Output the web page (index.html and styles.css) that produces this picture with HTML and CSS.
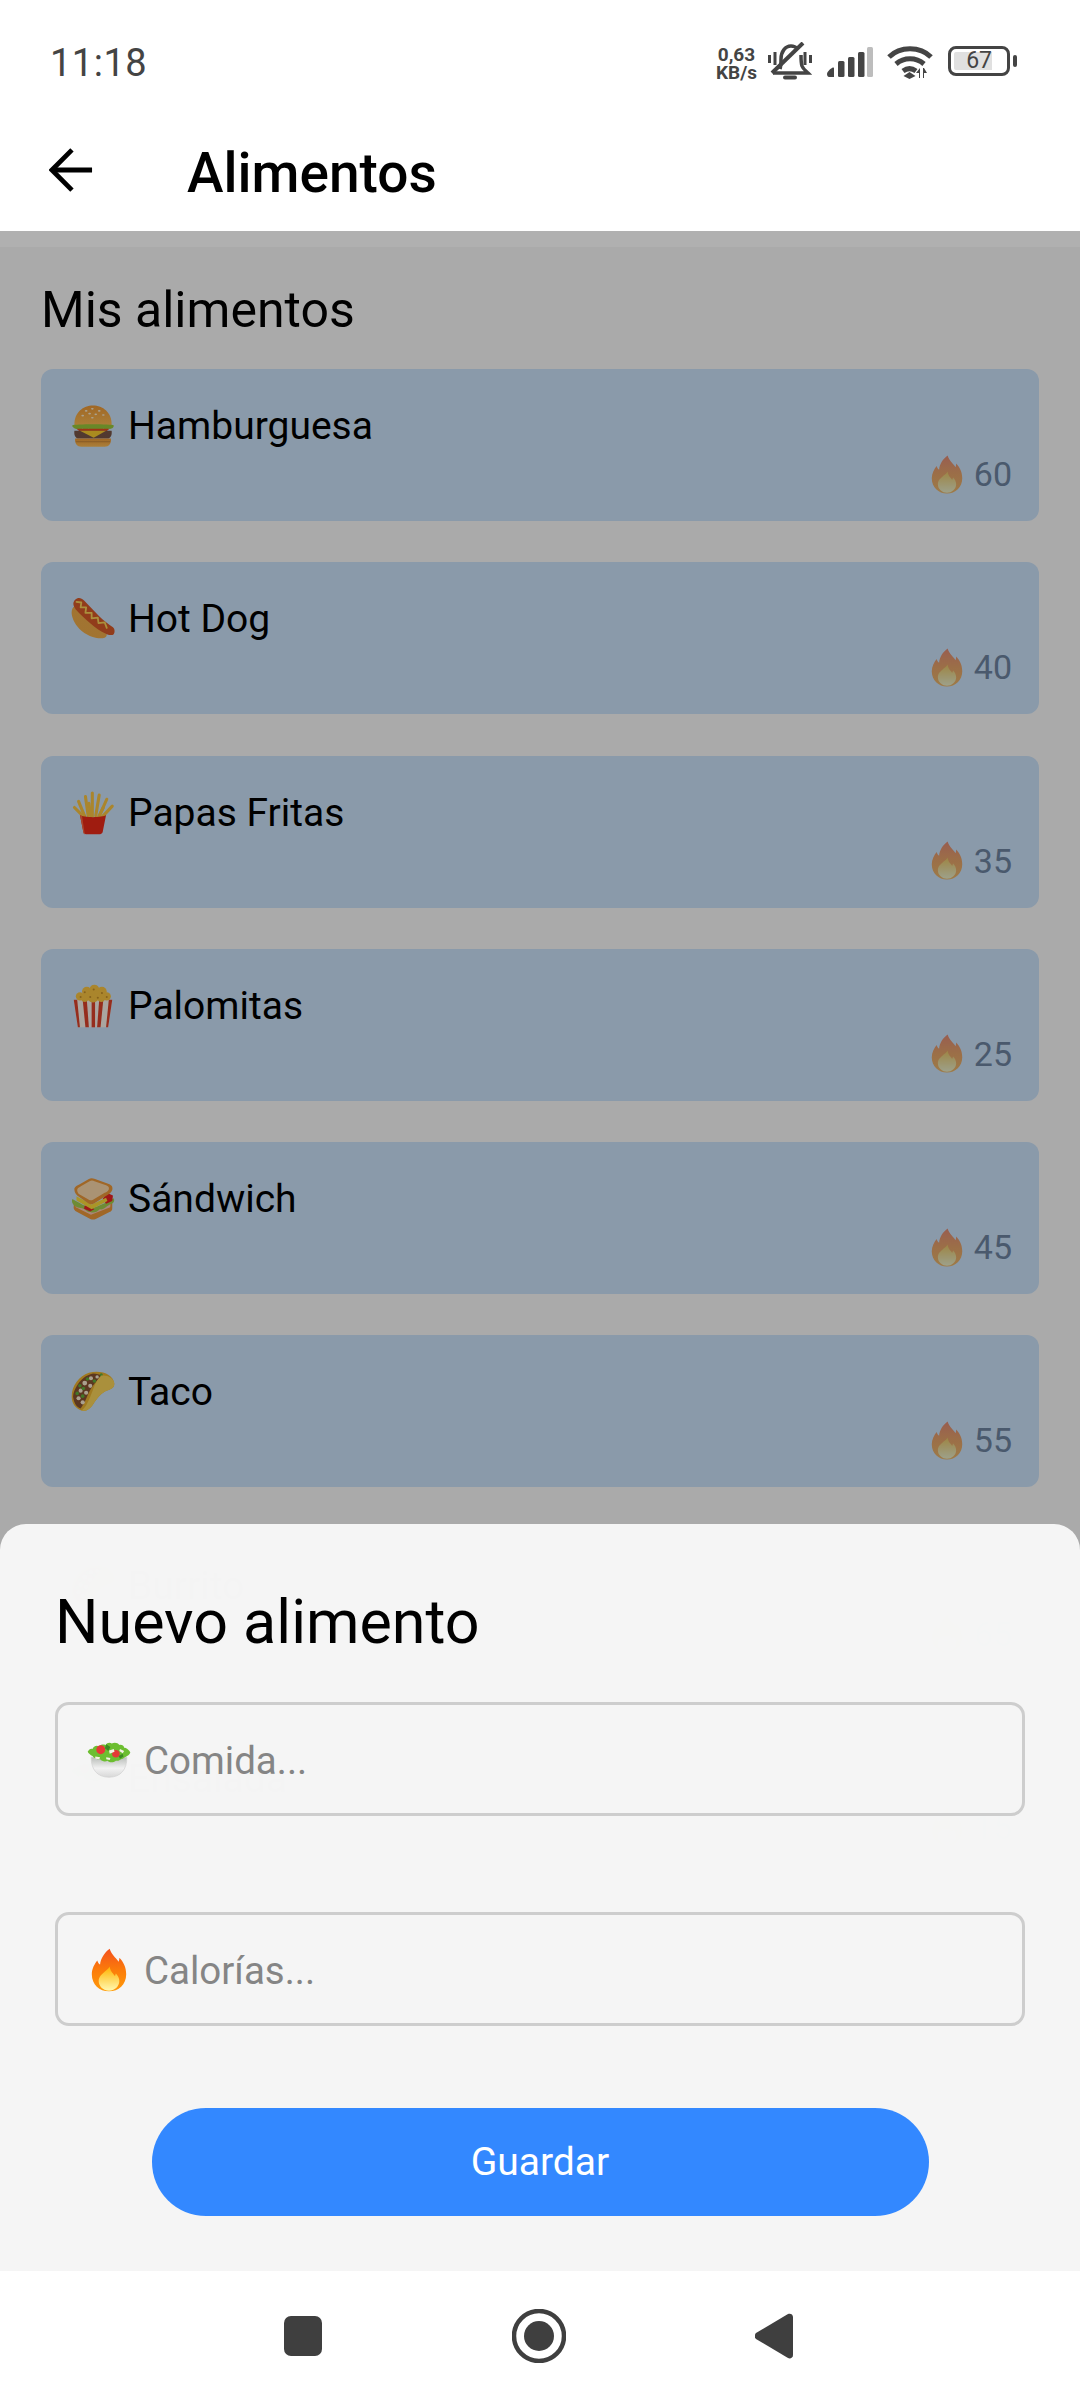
FILE: index.html
```html
<!DOCTYPE html>
<html lang="es">
<head>
<meta charset="utf-8">
<title>Alimentos</title>
<link rel="stylesheet" href="styles.css">
</head>
<body>
<svg class="defs" width="0" height="0" aria-hidden="true">
  <defs>
    <linearGradient id="flameOuter" x1="0" y1="0" x2="0" y2="1">
      <stop offset="0" stop-color="#f4511e"/><stop offset=".5" stop-color="#fb7c0a"/><stop offset="1" stop-color="#ff9a0a"/>
    </linearGradient>
    <linearGradient id="flameInner" x1="0" y1="0" x2="0" y2="1">
      <stop offset="0" stop-color="#ffb300"/><stop offset="1" stop-color="#fff8b0"/>
    </linearGradient>
    <linearGradient id="bun" x1="0" y1="0" x2="0" y2="1">
      <stop offset="0" stop-color="#f09a36"/><stop offset="1" stop-color="#ffbe55"/>
    </linearGradient>
    <linearGradient id="bowl" x1="0" y1="0" x2="0" y2="1">
      <stop offset="0" stop-color="#b9bdb9"/><stop offset=".55" stop-color="#f2f2f2"/><stop offset="1" stop-color="#d8d8d8"/>
    </linearGradient>
    <symbol id="flame" viewBox="0 0 52 64">
      <path fill="url(#flameOuter)" d="M27 1c3 9 8 12 13 19 1-3 1-4 1-6 6 6 10 14 10 24 0 15-11 25-25 25S1 53 1 38c0-8 4-15 8-20 1 3 2 5 4 6 1-9 6-17 14-23z"/>
      <path fill="url(#flameInner)" d="M27 27c1 7 4 9 7 13 1 2 1-1 2-3 3 3 5 7 5 11 0 8-7 14-15 14s-15-6-15-14c0-7 5-10 9-14 3-2 6-5 7-7z"/>
    </symbol>
    <symbol id="burger" viewBox="0 0 64 64">
      <path fill="url(#bun)" d="M5 31C4 12 18 2 32 2s28 10 27 29z"/>
      <g fill="#fff1d6"><ellipse cx="22" cy="10" rx="2" ry="1.200"/><ellipse cx="31" cy="7" rx="2" ry="1.200"/><ellipse cx="41" cy="10" rx="2" ry="1.200"/><ellipse cx="17" cy="17" rx="2" ry="1.200"/><ellipse cx="27" cy="14" rx="2" ry="1.200"/><ellipse cx="36" cy="15" rx="2" ry="1.200"/><ellipse cx="47" cy="16" rx="2" ry="1.200"/><ellipse cx="31" cy="20" rx="2" ry="1.200"/></g>
      <path fill="#9ccc3c" d="M2 31c3-2 57-2 60 0 1 3-3 6-7 5-3 2-6 1-8 0-3 2-7 2-10 1-4 1-8 1-11-1-3 2-7 1-9 0-5 2-16 0-15-5z"/>
      <path fill="#ef4d20" d="M8 36h48l-6 5H14z"/>
      <path fill="#7a5648" d="M5 39h54c1 5-1 11-5 11H10c-4 0-6-6-5-11z"/>
      <path fill="#ffd02e" d="M13 39h38L33 49z"/>
      <path fill="url(#bun)" d="M6 50h52c1 7-3 12-9 12H15C9 62 5 57 6 50z"/>
      <path fill="#c98738" d="M7 54h50v1.600H7z"/>
    </symbol>
    <symbol id="hotdog" viewBox="0 0 64 64">
      <path fill="#f2ae4a" d="M2 17c-3 6 0 18 10 29 10 10 24 15 34 14 5-1 6-3 6-6L15 14c-4-2-11-2-13 3z"/>
      <path fill="#d95a28" d="M6 4c4-4 9-3 13 1l22 23c6 6 13 11 20 16 3 2 3 8 1 10s-7 2-12-1C37 47 20 32 7 18 3 13 2 8 6 4z"/>
      <path fill="none" stroke="#ffd75a" stroke-width="2.600" stroke-linecap="round" stroke-linejoin="round" d="M8 7l7 1-1 7 8 0-1 8 9 0 0 8 9-1 1 8 9-1 3 8"/>
    </symbol>
    <symbol id="fries" viewBox="0 0 64 64">
      <g stroke="#ffc843" stroke-width="4.500" stroke-linecap="round">
        <path d="M31 3v34"/><path d="M21 8l4 28"/><path d="M41 6l-5 30"/><path d="M11 15l9 22"/><path d="M52 12L41 37"/><path d="M5 24l14 14"/><path d="M60 22L45 38"/><path d="M26 18l3 20"/><path d="M47 24l-7 14"/>
      </g>
      <path fill="#ee2a18" d="M13 35c5 4 33 4 38 0l-5 25c-1 2-3 3-5 3H23c-2 0-4-1-5-3z"/>
      <path fill="#ff6a42" d="M13 35l3 1 4 27c-1 0-2-1-2-3z"/>
    </symbol>
    <symbol id="popcorn" viewBox="0 0 64 64">
      <path fill="#fff8f0" d="M4 23h56l-6 40H10z"/>
      <g fill="#e0432b"><path d="M4 23h5l4 40h-3z"/><path d="M17 23h6l3 40h-5z"/><path d="M30 23h5v40h-5z"/><path d="M41 23h6l-4 40h-5z"/><path d="M55 23h5l-6 40h-3z"/></g>
      <g fill="#ffc842"><circle cx="13" cy="18" r="6"/><circle cx="23" cy="11" r="7"/><circle cx="34" cy="8" r="7"/><circle cx="45" cy="11" r="7"/><circle cx="52" cy="18" r="6"/><circle cx="32" cy="18" r="9"/><circle cx="20" cy="20" r="6"/><circle cx="44" cy="20" r="6"/></g>
      <g fill="#c8922a"><circle cx="20" cy="12" r="1.500"/><circle cx="33" cy="8" r="1.500"/><circle cx="45" cy="13" r="1.500"/><circle cx="28" cy="19" r="1.500"/><circle cx="39" cy="20" r="1.500"/><circle cx="14" cy="19" r="1.500"/><circle cx="52" cy="19" r="1.500"/></g>
    </symbol>
    <symbol id="sandwich" viewBox="0 0 64 64">
      <path fill="#f09a3a" d="M4 34l26 15 30-14v10c0 3-1 5-4 6L36 61c-3 1-5 1-8 0L9 51c-4-2-6-5-5-9z"/>
      <path fill="#ffc9b8" d="M5 35l24 12 29-12-1 9-28 11L7 44z"/>
      <path fill="#a5d24e" d="M2 32c8 4 19 12 28 13 9-1 22-8 32-14 2 3 0 7-3 8-8 3-10 9-17 8-4 4-9 6-14 4-6 0-8-6-14-6-6 0-15-6-12-13z"/>
      <path fill="#ee2222" d="M52 23l9 4-1 8-9 4-5-7zM20 41l10 3 4 3-6 3-9-4z"/>
      <path fill="#ffe03a" d="M8 28l22 12 21-10 2 5-23 12L8 34z"/>
      <path fill="#f09a3a" d="M5 19C4 15 8 13 12 11L26 3c3-2 6-1 9 0l20 7c5 2 6 5 5 9-1 3-4 6-8 8L34 38c-3 2-6 2-9 0L9 27c-2-2-4-5-4-8z"/>
      <path fill="#ffdcae" d="M9 19c0-3 3-4 6-6l12-7c2-1 5-1 7 0l17 6c3 1 5 3 4 6-1 2-3 4-6 5L32 33c-2 1-4 1-6 0L12 25c-2-1-3-4-3-6z"/>
    </symbol>
    <symbol id="taco" viewBox="0 0 64 64">
      <path fill="#f0b630" d="M26 4c17-5 36 2 37 16 0 7-6 8-13 11-8 4-12 11-18 19-4 6-10 11-17 9C6 56 1 48 1 39 1 22 12 9 26 4z"/>
      <path fill="#8a5230" d="M9 22C14 14 22 7 32 5c5 0 10 2 14 3-8 6-16 16-21 27-3 7-6 15-11 21-7-2-10-10-11-17 0-6 3-12 6-17z"/>
      <g fill="#fff0d4"><circle cx="29" cy="12" r="3"/><circle cx="20" cy="19" r="3.500"/><circle cx="28" cy="23" r="3"/><circle cx="14" cy="30" r="3"/><circle cx="22" cy="33" r="3"/><circle cx="11" cy="41" r="3"/><circle cx="17" cy="47" r="3"/><circle cx="38" cy="10" r="2.500"/></g>
      <g fill="#62b23a"><circle cx="13" cy="23" r="2.600"/><circle cx="24" cy="13" r="2.600"/><circle cx="34" cy="16" r="2.600"/><circle cx="18" cy="27" r="2.600"/><circle cx="9" cy="34" r="2.600"/><circle cx="17" cy="38" r="2.600"/><circle cx="44" cy="7" r="2.200"/></g>
      <path fill="#ffd85a" d="M44 8c9-1 19 4 19 12 0 7-6 8-13 11-8 4-12 11-18 19-4 6-10 11-17 9 6-3 9-11 13-20 5-12 8-24 16-31z"/>
    </symbol>
    <symbol id="salad" viewBox="0 0 64 52">
      <path fill="url(#bowl)" stroke="#d0d0d0" stroke-width="1" d="M6 22h52c0 18-9 29-26 29S6 40 6 22z"/>
      <path fill="#6cbe30" d="M1 14c2-3 4-5 7-4 1-4 6-6 9-4 3-3 7-3 10-2 2-3 6-4 9-2 4-2 9-1 11 2 3-1 7 1 7 4 4 0 8 4 9 7-2 5-7 6-11 9-4 1-6 4-10 3-4 3-9 3-12 0-4 2-8 1-11-2-5 0-9-2-11-5-3-1-6-4-7-6z"/>
      <circle cx="20" cy="11" r="6.500" fill="#e53935"/>
      <circle cx="42" cy="17" r="5.500" fill="#e53935"/>
      <path fill="#f4f1e4" d="M32 12l7-2 1 4-7 3zM12 21l7 1-1 3-6-1zM48 10l6 3-2 3-5-3zM28 22l6 1-1 3-5-1z"/>
      <path fill="#3c8a24" d="M28 3l6 4-3 6-5-4zM46 20l6-3 1 4-5 3z"/>
    </symbol>
  </defs>
</svg>
<div class="phone">
  <header class="top">
    <div class="status">
      <span class="clock">11:18</span>
      <div class="status-icons">
        <div class="speed"><span>0,63</span><span>KB/s</span></div>
        <svg class="i-bell" viewBox="0 0 44 38" fill="none" stroke="#444" stroke-width="3.500">
          <path d="M12 27c1-3 1-6 1-10 0-7 4-13 10-13 3 0 5 1 7 3M33 13c0 4 0 8 1 11 1 3 4 5 6 7H5"/>
          <path d="M17 35.500h10" stroke-linecap="round" stroke-width="4"/>
          <path d="M35 1L4 31" stroke-width="4"/>
          <path d="M1.500 13v8M7 10v13M37 10v13M42.500 13v8" stroke-width="3"/>
        </svg>
        <svg class="i-signal" viewBox="0 0 46 30">
          <path fill="#444" d="M0 27c0-2 3-5 5-6s2 0 2 1v8H2c-1 0-2-1-2-3z"/>
          <rect x="11" y="14" width="6.500" height="16" rx="1.500" fill="#444"/>
          <rect x="21" y="10" width="6.500" height="20" rx="1.500" fill="#444"/>
          <rect x="31" y="5" width="6.500" height="25" rx="1.500" fill="#444"/>
          <rect x="40" y="0" width="6" height="30" rx="1.500" fill="#bdbdbd"/>
        </svg>
        <svg class="i-wifi" viewBox="0 0 46 34">
          <g fill="none" stroke="#444" stroke-width="5">
            <path d="M2 12C13 1 33 1 44 12"/>
            <path d="M9 19c8-7 20-7 28 0"/>
            <path d="M16 26c4-3 9-3 13 0"/>
          </g>
          <path fill="#444" d="M22.500 27l6 4-6 3-6-3z"/>
          <path fill="#444" d="M32 33v-5h-3l4-5v10zM36 23v10h1v-5h3l-3-5z"/>
        </svg>
        <div class="battery">
          <div class="battery-body"><span class="battery-level">67</span></div>
          <div class="battery-nub"></div>
        </div>
      </div>
    </div>
    <div class="appbar">
      <svg class="back" viewBox="0 0 46 46" fill="none" stroke="#000" stroke-width="5">
        <path d="M45 23H4"/><path d="M24 2L3 23l21 21"/>
      </svg>
      <h1 class="page-title">Alimentos</h1>
    </div>
  </header>

  <main class="content">
    <h2 class="section-title">Mis alimentos</h2>
    <ul class="foods">
      <li class="food"><div class="food-name"><svg class="emoji"><use href="#burger"/></svg>Hamburguesa</div><div class="food-cal"><svg class="flame"><use href="#flame"/></svg>60</div></li>
      <li class="food"><div class="food-name"><svg class="emoji"><use href="#hotdog"/></svg>Hot Dog</div><div class="food-cal"><svg class="flame"><use href="#flame"/></svg>40</div></li>
      <li class="food"><div class="food-name"><svg class="emoji"><use href="#fries"/></svg>Papas Fritas</div><div class="food-cal"><svg class="flame"><use href="#flame"/></svg>35</div></li>
      <li class="food"><div class="food-name"><svg class="emoji"><use href="#popcorn"/></svg>Palomitas</div><div class="food-cal"><svg class="flame"><use href="#flame"/></svg>25</div></li>
      <li class="food"><div class="food-name"><svg class="emoji"><use href="#sandwich"/></svg>Sándwich</div><div class="food-cal"><svg class="flame"><use href="#flame"/></svg>45</div></li>
      <li class="food"><div class="food-name"><svg class="emoji"><use href="#taco"/></svg>Taco</div><div class="food-cal"><svg class="flame"><use href="#flame"/></svg>55</div></li>
      <li class="food"><div class="food-name"><svg class="emoji"><use href="#taco"/></svg>Burrito</div><div class="food-cal"><svg class="flame"><use href="#flame"/></svg>65</div></li>
      <li class="food"><div class="food-name"><svg class="emoji"><use href="#salad"/></svg>Ensalada</div><div class="food-cal"><svg class="flame"><use href="#flame"/></svg>15</div></li>
    </ul>
    <div class="scrim"></div>
    <section class="sheet">
      <h2 class="sheet-title">Nuevo alimento</h2>
      <div class="fields">
        <div class="field"><svg class="emoji"><use href="#salad"/></svg><span class="placeholder">Comida...</span></div>
        <div class="field"><svg class="emoji"><use href="#flame"/></svg><span class="placeholder">Calorías...</span></div>
      </div>
      <button class="save" type="button">Guardar</button>
    </section>
  </main>

  <nav class="navbar">
    <svg class="nav-square" viewBox="0 0 38 40"><rect width="38" height="40" rx="7" fill="#3f3f3f"/></svg>
    <svg class="nav-home" viewBox="0 0 54 54"><circle cx="27" cy="27" r="25" fill="none" stroke="#3f3f3f" stroke-width="4.500"/><circle cx="27" cy="27" r="15" fill="#3f3f3f"/></svg>
    <svg class="nav-back" viewBox="0 0 38 46"><path fill="#3f3f3f" d="M1 20L33 1c2-1 5 0 5 3v38c0 3-3 4-5 3L1 26c-1.500-1-1.500-5 0-6z"/></svg>
  </nav>
</div>
</body>
</html>
```

FILE: styles.css
```css
* { box-sizing: border-box; }

html, body {
  margin: 0;
  padding: 0;
}

body {
  width: 1080px;
  height: 2400px;
  overflow: hidden;
  font-family: Roboto, "Liberation Sans", sans-serif;
  background: #fff;
  color: #000;
}

.defs { position: absolute; }

.phone {
  display: flex;
  flex-direction: column;
  height: 2400px;
}

/* header */
.top {
  height: 231px;
  flex: none;
  background: #fff;
}

.status {
  height: 122px;
  display: flex;
  justify-content: space-between;
  padding: 41px 63px 0 50px;
}

.clock {
  font-size: 38px;
  line-height: 44px;
  color: #444;
  letter-spacing: 0.5px;
}

.status-icons {
  display: flex;
  align-items: flex-start;
  height: 40px;
}

.speed {
  display: flex;
  flex-direction: column;
  width: 41px;
  margin: 5px 11px 0 0;
  font-size: 19px;
  font-weight: 700;
  line-height: 18px;
  color: #444;
  text-align: center;
  white-space: nowrap;
}

.i-bell { width: 44px; height: 38px; margin: 1px 15px 0 0; }
.i-signal { width: 46px; height: 30px; margin: 6px 14px 0 0; }
.i-wifi { width: 46px; height: 34px; margin: 4px 15px 0 0; }

.battery {
  display: flex;
  align-items: center;
  margin-top: 5px;
  gap: 3px;
}

.battery-body {
  width: 62px;
  height: 30px;
  border: 3.5px solid #444;
  border-radius: 8px;
  padding: 3px;
  display: flex;
}

.battery-level {
  width: 38px;
  background: #e0e0e0;
  font-size: 23px;
  line-height: 17px;
  color: #444;
  text-align: right;
  border-radius: 2px 0 0 2px;
}

.battery-nub {
  width: 4px;
  height: 12px;
  background: #444;
  border-radius: 2px;
}

.appbar {
  display: flex;
  align-items: center;
  height: 109px;
  padding: 0 0 8px 49px;
}

.back {
  width: 44px;
  height: 44px;
  margin: 0 94px 6px 0;
}

.page-title {
  margin: 0;
  font-size: 55px;
  font-weight: 500;
  line-height: 60px;
}

/* list */
.content {
  position: relative;
  flex: 1;
  overflow: hidden;
  padding: 50px 41px 0;
  background: #fff;
}

.section-title {
  margin: 0 0 30px;
  font-size: 50px;
  font-weight: 400;
  line-height: 58px;
}

.foods {
  list-style: none;
  margin: 0;
  padding: 0;
  display: flex;
  flex-direction: column;
  gap: 41.25px;
}

.food {
  flex: none;
  height: 152px;
  padding: 35px 27px 0 30px;
  border-radius: 12px;
  background: #cfe7ff;
}

.food-name {
  display: flex;
  align-items: center;
  gap: 13px;
  font-size: 39px;
  line-height: 44px;
}

.emoji {
  width: 44px;
  height: 44px;
  flex: none;
}

.food-cal {
  display: flex;
  justify-content: flex-end;
  align-items: center;
  gap: 11px;
  margin-top: 4px;
  font-size: 34px;
  line-height: 44px;
  color: #6f86a3;
}

.flame {
  width: 32px;
  height: 39px;
  opacity: 0.6;
}

.scrim {
  position: absolute;
  inset: 0;
  background: linear-gradient(rgba(0, 0, 0, 0.31) 16px, rgba(0, 0, 0, 0.333) 16px);
}

/* sheet */
.sheet {
  position: absolute;
  left: 0;
  right: 0;
  bottom: 0;
  height: 747px;
  padding: 65px 55px 0 55px;
  border-radius: 26px 26px 0 0;
  background: rgba(246, 246, 246, 0.992);
}

.sheet-title {
  margin: 0 0 47px;
  font-size: 61px;
  font-weight: 400;
  line-height: 66px;
}

.fields {
  display: flex;
  flex-direction: column;
  gap: 96px;
}

.field {
  display: flex;
  align-items: center;
  gap: 13px;
  height: 114px;
  padding: 2px 0 0 29px;
  border: 3px solid #cdcdcd;
  border-radius: 14px;
}

.placeholder {
  font-size: 38.5px;
  color: #858585;
}

.save {
  display: block;
  width: 777px;
  height: 108px;
  margin: 82px auto 0;
  border: 0;
  border-radius: 54px;
  background: #3388ff;
  color: #fff;
  font-family: inherit;
  font-size: 39px;
}

/* nav */
.navbar {
  flex: none;
  height: 129px;
  display: flex;
  align-items: center;
  justify-content: center;
  background: #fff;
  padding-right: 4px;
}

.nav-square { width: 38px; height: 40px; }
.nav-home { width: 54px; height: 54px; margin-left: 190px; }
.nav-back { width: 38px; height: 46px; margin-left: 189px; }
```
